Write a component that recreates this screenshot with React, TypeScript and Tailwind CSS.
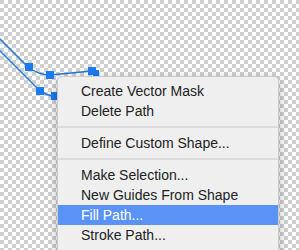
export default function App() {
  type Item = { label: string; active?: boolean } | "sep";
  const items: Item[] = [
    { label: "Create Vector Mask" },
    { label: "Delete Path" },
    "sep",
    { label: "Define Custom Shape..." },
    "sep",
    { label: "Make Selection..." },
    { label: "New Guides From Shape" },
    { label: "Fill Path...", active: true },
    { label: "Stroke Path..." },
  ];

  return (
    <div className="relative w-[299px] h-[250px] overflow-hidden bg-white font-['Liberation_Sans',Arial,sans-serif]">
      {/* canvas with path */}
      <svg width="299" height="250" className="block">
        <defs>
          <pattern id="checker" width="8" height="8" patternUnits="userSpaceOnUse">
            <rect width="8" height="8" fill="#ffffff" />
            <rect width="4" height="4" fill="#cfcfcf" />
            <rect x="4" y="4" width="4" height="4" fill="#cfcfcf" />
          </pattern>
        </defs>
        <rect width="299" height="250" fill="url(#checker)" />
        <g stroke="#1f78e0" strokeWidth="1.5" fill="none">
          <path d="M-2 37 L28 67 C36 73 42 75 50 75 L92 71" />
          <path d="M-2 49 L40 91 C45 94 49 96 54 96 L70 98" />
        </g>
        <g fill="#1b7bf2">
          <rect x="25" y="63" width="8" height="8" />
          <rect x="46" y="71" width="8" height="8" />
          <rect x="88" y="67" width="8" height="8" />
          <rect x="93" y="70" width="6" height="6" />
          <rect x="36" y="87" width="8" height="8" />
          <rect x="51" y="92" width="8" height="8" />
        </g>
      </svg>

      {/* context menu */}
      <div className="absolute left-[57px] top-[76px] w-[222px] h-[200px] rounded-[5px] bg-[#efefef] border border-black/15 shadow-[0_3px_10px_rgba(0,0,0,0.3)] pt-[4px] text-[14px] text-[#222]">
        {items.map((it, i) =>
          it === "sep" ? (
            <div key={i} className="py-[5px]">
              <div className="h-[2px] bg-[#dcdcdc]" />
            </div>
          ) : (
            <div
              key={i}
              className={`h-[20px] leading-[20px] pl-[23px] ${it.active ? "bg-[#5b92f6] text-white" : ""}`}
            >
              {it.label}
            </div>
          )
        )}
      </div>
    </div>
  );
}
